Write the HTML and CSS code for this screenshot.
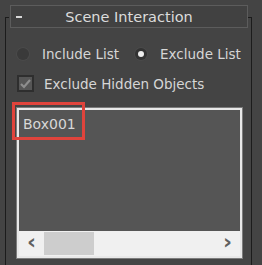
FILE: index.html
```html
<!DOCTYPE html>
<html lang="en">
<head>
  <meta charset="UTF-8">
  <title>Scene Interaction</title>
  <link rel="stylesheet" href="styles.css">
</head>
<body>
  <div class="rollout">
    <div class="title-row">
      <span class="tick left"></span>
      <div class="title">
        <span class="minus"></span>
        <span class="label">Scene Interaction</span>
        <span></span>
      </div>
      <span class="tick right"></span>
    </div>
    <div class="content">
      <div class="radios">
        <label class="radio"><span class="dot"></span>Include List</label>
        <label class="radio"><span class="dot on"></span>Exclude List</label>
      </div>
      <label class="check"><span class="box">
        <svg width="13" height="13" viewBox="0 0 13 13"><path d="M2 7 L5 10 L11 3" fill="none" stroke="#8e8e8e" stroke-width="2.2"/></svg>
      </span>Exclude Hidden Objects</label>
      <div class="list-wrap">
        <div class="list">
          <div class="items">
            <div class="item">Box001</div>
          </div>
          <div class="hscroll">
            <span class="arrow">&#8249;</span>
            <span class="track"><span class="thumb"></span></span>
            <span class="arrow">&#8250;</span>
          </div>
        </div>
        <div class="highlight"></div>
      </div>
    </div>
  </div>
</body>
</html>
```

FILE: styles.css
```css
html, body {
  margin: 0;
  background: #444444;
}

body {
  width: 262px;
  height: 265px;
  overflow: hidden;
  padding-top: 5px;
  box-sizing: border-box;
  font-family: "DejaVu Sans", sans-serif;
  font-size: 13.5px;
  color: #d6d6d6;
}

.rollout {
  margin-left: 5px;
  width: 247px;
}

.title-row {
  display: flex;
  align-items: flex-end;
  height: 23px;
}

.tick {
  width: 4px;
  height: 11px;
  border-top: 1px solid #1c1c1c;
  box-sizing: border-box;
}
.tick.left { border-left: 1px solid #1c1c1c; margin-right: 1px; }
.tick.right { border-right: 1px solid #1c1c1c; }

.title {
  flex: 1;
  height: 23px;
  box-sizing: border-box;
  background: #414141;
  border: 1px solid #5c5c5c;
  display: grid;
  grid-template-columns: 1fr auto 1fr;
  align-items: center;
}

.minus {
  width: 6px;
  height: 2px;
  background: #d8d8d8;
  margin-left: 5px;
  margin-top: 1px;
}

.label {
  font-size: 14.5px;
  color: #dcdcdc;
  margin-top: 1px;
}

.content {
  border-left: 1px solid #1c1c1c;
  border-right: 1px solid #1c1c1c;
  padding: 18px 0 0 11px;
  height: 240px;
  box-sizing: border-box;
}

.radios {
  display: flex;
  gap: 16px;
  height: 16px;
  align-items: center;
}

.radio {
  display: flex;
  align-items: center;
  gap: 13px;
}

.dot {
  width: 12px;
  height: 12px;
  border-radius: 50%;
  background: #3a3a3a;
  box-shadow: 0 0 0 1px #4a4a4a;
  display: flex;
  align-items: center;
  justify-content: center;
}
.dot.on {
  background: #333;
}
.dot.on::after {
  content: "";
  width: 6px;
  height: 6px;
  border-radius: 50%;
  background: #eeeeee;
}

.check {
  display: flex;
  align-items: center;
  gap: 10px;
  margin-top: 13px;
  height: 17px;
}

.box {
  width: 17px;
  height: 17px;
  box-sizing: border-box;
  background: #565656;
  border: 2px solid #2e2e2e;
  display: flex;
  align-items: center;
  justify-content: center;
}

.list-wrap {
  position: relative;
  margin-top: 16px;
  width: 225px;
}

.list {
  height: 150px;
  box-sizing: border-box;
  border: 2px solid #e8e8e8;
  box-shadow: 0 0 0 1px #7c7c7c;
  display: flex;
  flex-direction: column;
}

.items {
  flex: 1;
  background: #555555;
  padding: 6px 0 0 4px;
}

.item {
  font-size: 14px;
  color: #d8d8d8;
}

.hscroll {
  height: 25px;
  background: #f0f0f0;
  display: flex;
  align-items: center;
}

.arrow {
  width: 25px;
  text-align: center;
  font-size: 22px;
  font-weight: bold;
  color: #606060;
  line-height: 20px;
  margin-top: -3px;
}

.track {
  flex: 1;
  height: 23px;
}

.thumb {
  display: block;
  width: 50px;
  height: 23px;
  background: #cdcdcd;
}

.highlight {
  position: absolute;
  left: -5px;
  top: -6px;
  width: 73px;
  height: 38px;
  box-sizing: border-box;
  border: 3px solid #e0443c;
}
```
